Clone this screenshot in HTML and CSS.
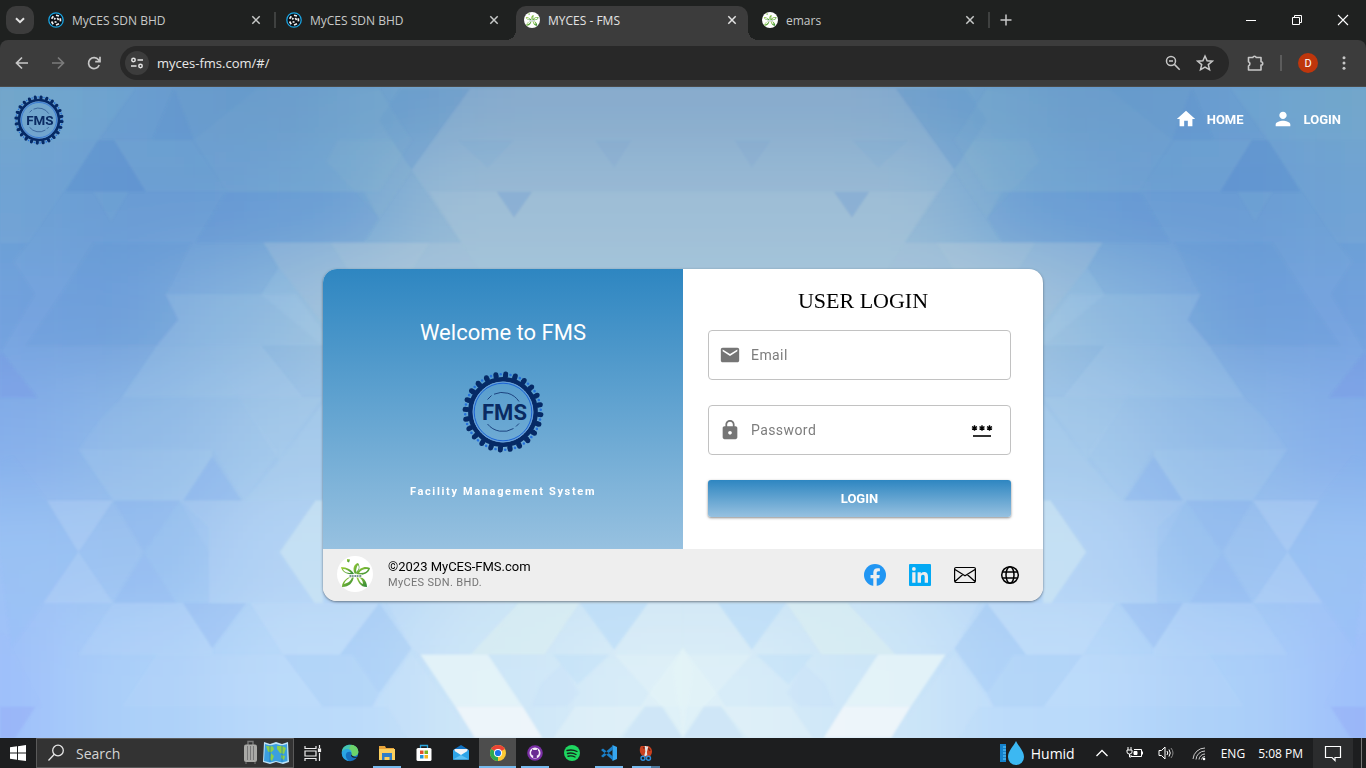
FILE: index.html
```
<!DOCTYPE html>
<html lang="en">
<head>
<meta charset="utf-8">
<title>MYCES - FMS</title>
<link rel="stylesheet" href="styles.css">
</head>
<body>
<svg class="defs" aria-hidden="true">
  <defs>
    <symbol id="close" viewBox="0 0 16 16"><path d="M4.3 4.3l7.4 7.4M11.7 4.3l-7.4 7.4" stroke="currentColor" stroke-width="1.5" fill="none"/></symbol>
    <symbol id="orbit" viewBox="0 0 16 16">
      <circle cx="8" cy="8" r="7.2" fill="#0c0f14" stroke="#1aa3e0" stroke-width="1.3"/>
      <path d="M8 3.200l3 .8M12.300 6.200l.2 3.200M11 11.800l-3 1.200M5.200 12.200L3.600 9.500M3.600 6.800L5.300 4.200M9.300 6l1.300 2M8.500 10.300L6.600 9.800M6.300 7.500l1-1.400" stroke="#f2f2f2" stroke-width="1.700" fill="none"/>
    </symbol>
    <linearGradient id="leaf" x1="0" y1="0" x2="1" y2="1"><stop offset="0" stop-color="#a4d436"/><stop offset="1" stop-color="#2a8437"/></linearGradient>
    <symbol id="flower" viewBox="0 0 36 36">
      <circle cx="18" cy="18" r="18" fill="#fff"/>
      <g fill="url(#leaf)">
        <path fill-rule="evenodd" d="M18 18C15 13 17 8 21 7c3 4 1 9-3 11zm1-2c3-2 3.500-5 2-7-1 1-2 4-2 7z"/>
        <path fill-rule="evenodd" d="M19 18c4-7 9-8 14-6-1 6-8 8-14 6zm3-1c5 .5 8-1 9-4-4-.5-7 1-9 4z"/>
        <path fill-rule="evenodd" d="M17 18C12 19 5 17 4 11c6 0 11 3 13 7zm-3-1c-2-2-5-4-8-4 1 3 4 4 8 4z"/>
        <path fill-rule="evenodd" d="M19 20c7 0 11 5 11 11-7 0-9-5-11-11zm2 1c3 1 5 4 5 7-3-1-4-4-5-7z"/>
        <path fill-rule="evenodd" d="M17 20c-1 7-5 11-12 11 0-6 5-10 12-11zm-2 1c-4 1-7 4-8 7 4-1 7-3 8-7z"/>
        <path d="M10 3l3 .5-1 3-2-1z"/>
      </g>
      <path d="M12 20h13" stroke="#fff" stroke-width="3"/>
      <path d="M12.500 20h12" stroke="#4a6b70" stroke-width="1.400" stroke-dasharray="2 .6 1.500 .8"/>
    </symbol>
    <symbol id="gear" viewBox="0 0 82 82">
      <g transform="rotate(4 41 41)" fill="none">
        <circle cx="41" cy="41" r="38" stroke="#062a66" stroke-width="5" stroke-linecap="round" pathLength="240" stroke-dasharray="0 10"/>
        <circle cx="41" cy="41" r="36" stroke="#062a66" stroke-width="5.200" stroke-linecap="round" pathLength="240" stroke-dasharray="0 10"/>
        <circle cx="41" cy="41" r="32.600" stroke="#062a66" stroke-width="4.800"/>
        <circle cx="41" cy="41" r="37.800" stroke="#2470dc" stroke-width="2.600" stroke-linecap="round" pathLength="240" stroke-dasharray="0 10" stroke-dashoffset="5"/>
      </g>
      <circle cx="41" cy="41" r="30" fill="none" stroke="#6aa0dc" stroke-width="1"/>
      <circle cx="41" cy="41" r="28.800" fill="none" stroke="#1b62d4" stroke-width="1"/>
      <path d="M25.500 28.500l4-4M32 23.200a20 20 0 0 1 25 7.300M25.500 53a20 20 0 0 0 26 4.500M54 55.500l3-3" fill="none" stroke="#1d4480" stroke-width="1"/>
      <text x="42.500" y="49" text-anchor="middle" font-family="Roboto, sans-serif" font-size="22" font-weight="700" fill="#0a2b63">FMS</text>
    </symbol>
  </defs>
</svg>

<header class="tabstrip">
  <button class="tab-search" aria-label="Search tabs"><svg width="16" height="16" viewBox="0 0 16 16"><path d="M4 6.200l4 4 4-4" fill="none" stroke="#e3e3e3" stroke-width="2"/></svg></button>
  <nav class="tabs" aria-label="Tabs">
    <div class="tab"><svg class="fav"><use href="#orbit"/></svg><span class="tab-title">MyCES SDN BHD</span><button class="tab-close" aria-label="Close"><svg width="16" height="16"><use href="#close"/></svg></button></div>
    <div class="tab no-sep"><svg class="fav"><use href="#orbit"/></svg><span class="tab-title">MyCES SDN BHD</span><button class="tab-close" aria-label="Close"><svg width="16" height="16"><use href="#close"/></svg></button></div>
    <div class="tab active no-sep"><svg class="fav"><use href="#flower"/></svg><span class="tab-title">MYCES - FMS</span><button class="tab-close" aria-label="Close"><svg width="16" height="16"><use href="#close"/></svg></button></div>
    <div class="tab"><svg class="fav"><use href="#flower"/></svg><span class="tab-title">emars</span><button class="tab-close" aria-label="Close"><svg width="16" height="16"><use href="#close"/></svg></button></div>
  </nav>
  <button class="new-tab" aria-label="New tab"><svg width="16" height="16" viewBox="0 0 16 16"><path d="M8 2.500v11M2.500 8h11" stroke="#c7c7c7" stroke-width="1.500"/></svg></button>
  <div class="win-buttons">
    <button aria-label="Minimize"><svg width="12" height="12" viewBox="0 0 12 12"><path d="M1 6.500h10" stroke="#fff"/></svg></button>
    <button aria-label="Restore"><svg width="12" height="12" viewBox="0 0 12 12"><path d="M1.500 3.500h7v7h-7zM3.500 3.500v-2h7v7h-2" fill="none" stroke="#fff"/></svg></button>
    <button aria-label="Close window"><svg width="12" height="12" viewBox="0 0 12 12"><path d="M1 1l10 10M11 1L1 11" stroke="#fff" stroke-width="1.100"/></svg></button>
  </div>
</header>

<div class="toolbar-wrap">
<div class="toolbar">
  <button class="tool" aria-label="Back"><svg width="16" height="16" viewBox="0 0 16 16"><path d="M14 8H3M8 2.500L2.500 8 8 13.500" fill="none" stroke="#c7c7c7" stroke-width="1.700"/></svg></button>
  <button class="tool" aria-label="Forward"><svg width="16" height="16" viewBox="0 0 16 16"><path d="M2 8h11M8 2.500L13.500 8 8 13.500" fill="none" stroke="#7b7b7b" stroke-width="1.700"/></svg></button>
  <button class="tool" aria-label="Reload"><svg width="16" height="16" viewBox="0 0 16 16"><path d="M13.200 10A5.500 5.500 0 1 1 12.500 4.800L14 6.500M14 1.800v4.900H9.200" fill="none" stroke="#c7c7c7" stroke-width="1.700"/></svg></button>
  <div class="omnibox">
    <button class="site-info" aria-label="View site information"><svg width="14" height="14" viewBox="0 0 14 14" fill="none" stroke="#e3e3e3" stroke-width="1.500"><circle cx="3.500" cy="4" r="1.700"/><path d="M7.500 4H13M1 10h5.500"/><circle cx="10.500" cy="10" r="1.700"/></svg></button>
    <input class="url" aria-label="Address" value="myces-fms.com/#/">
    <button class="tool" aria-label="Zoom"><svg width="16" height="16" viewBox="0 0 16 16" fill="none" stroke="#c7c7c7" stroke-width="1.500"><circle cx="6" cy="6" r="4.500"/><path d="M9.400 9.400L14.700 14.700M4 6h4"/></svg></button>
    <button class="tool" aria-label="Bookmark"><svg width="18" height="18" viewBox="0 0 18 18"><path d="M9 2l2.100 4.700 5.100.5-3.900 3.400 1.200 5.100L9 13l-4.500 2.700 1.200-5.100L1.800 7.200l5.100-.5z" fill="none" stroke="#c7c7c7" stroke-width="1.500"/></svg></button>
  </div>
  <button class="tool ext" aria-label="Extensions"><svg width="18" height="18" viewBox="0 0 18 18"><path d="M2.500 3.500h4.300a1.800 1.800 0 0 1 3.400 0H15v4.200a1.700 1.700 0 0 1 0 3.400v4.900H2.500v-4.100a2.200 2.200 0 0 0 0-4.100z" fill="none" stroke="#c7c7c7" stroke-width="1.600" stroke-linejoin="round"/></svg></button>
  <span class="divider"></span>
  <button class="profile" aria-label="Profile">D</button>
  <button class="tool" aria-label="Menu"><svg width="16" height="16" viewBox="0 0 16 16" fill="#c7c7c7"><circle cx="8" cy="2.700" r="1.500"/><circle cx="8" cy="8" r="1.500"/><circle cx="8" cy="13.300" r="1.500"/></svg></button>
</div>
</div>

<div class="page">
  <svg class="backdrop" viewBox="0 0 3136 1568" preserveAspectRatio="none" aria-hidden="true">
    <defs>
      <filter id="soft" x="-5%" y="-10%" width="110%" height="120%"><feGaussianBlur stdDeviation="100 85"/></filter>
      <filter id="edge" x="0" y="0" width="100%" height="100%"><feGaussianBlur stdDeviation="2.500"/></filter>
      <g id="tones">
        <path fill="#6fa4ca" d="M-400-300H150V150H-400z"/><path fill="#6a9ed0" d="M150-300H430V150H150z"/><path fill="#6699cc" d="M430-300H750V150H430z"/><path fill="#6ea2ce" d="M750-300H1050V150H750z"/><path fill="#7fa6cb" d="M1050-300H1570V150H1050z"/>
        <path fill="#6ea3d4" d="M-400 150H150V420H-400z"/><path fill="#6a9cd4" d="M150 150H600V420H150z"/><path fill="#6fa4d4" d="M600 150H900V420H600z"/><path fill="#93b7d4" d="M900 150H1570V420H900z"/>
        <path fill="#77a4e0" d="M-400 420H150V700H-400z"/><path fill="#73a2dc" d="M150 420H400V700H150z"/><path fill="#86b3de" d="M400 420H700V700H400z"/><path fill="#9fc2dc" d="M700 420H1570V700H700z"/>
        <path fill="#85aeea" d="M-400 700H180V980H-400z"/><path fill="#8fb9e7" d="M180 700H500V980H180z"/><path fill="#a0c6ea" d="M500 700H1570V980H500z"/>
        <path fill="#9dc3f4" d="M-400 980H180V1260H-400z"/><path fill="#9cc2f0" d="M180 980H500V1260H180z"/><path fill="#b0d2f4" d="M500 980H1000V1260H500z"/><path fill="#c8e2f4" d="M1000 980H1570V1260H1000z"/>
        <path fill="#9fc0fa" d="M-400 1260H150V1900H-400z"/><path fill="#acd0f9" d="M150 1260H500V1900H150z"/><path fill="#badafa" d="M500 1260H950V1900H500z"/><path fill="#cde6f8" d="M950 1260H1300V1900H950z"/><path fill="#d8ecf8" d="M1300 1260H1570V1900H1300z"/>
      </g>
      <g id="facets">
        <g opacity=".6">
        <g fill="#8fc0cc">
          <path opacity=".18" d="M0 4H310L225 128H0z"/><path opacity=".12" d="M225 128L65 375H0V128z"/>
          <path opacity=".2" d="M445 128L400 4H870L945 128 870 252H520z"/><path opacity=".2" d="M775 128H900L945 200 870 315 750 180z"/>
          <path opacity=".15" d="M262 128H440L520 252H335z"/><path opacity=".15" d="M215 252H295L255 325z"/>
        </g>
        <g fill="#c9d6dc">
          <path opacity=".2" d="M1080 4H1568V440H1100L945 200z"/><path opacity=".2" d="M985 252H1568V440H1100z"/>
          <path opacity=".34" d="M605 375H1060L1100 440H1000L742 570 640 435z"/><path opacity=".2" d="M760 375H985L945 440H800z"/>
        </g>
        <g fill="#4f86cf">
          <path opacity=".45" d="M225 128H262L335 252H150z"/><path opacity=".24" d="M520 252H835L870 315 835 375H450z"/>
          <path opacity=".2" d="M1080 4L1020 90 945 200 870 80 920 4z"/><path opacity=".2" d="M400 4H590L445 128H350z"/>
          <path opacity=".36" d="M1140 252H1222L1180 315z"/><path opacity=".12" d="M1365 128H1450L1410 195z"/><path opacity=".1" d="M1050 128H1180L1120 195z"/>
          <path opacity=".14" d="M140 499L215 375H440L380 499 410 560 360 623H60z"/><path opacity=".2" d="M0 635L85 747H0z" fill="#6a70e8"/>
          <path opacity=".14" d="M0 375H65L30 420 80 499 0 640z"/>
        </g>
        <g fill="#c4e0f0">
          <path opacity=".22" d="M380 499H680L742 590V623H360L410 560z"/><path opacity=".2" d="M640 435L742 570V623L600 499z"/>
          <path opacity=".24" d="M360 623H470L548 747H280z"/><path opacity=".26" d="M470 623H600L695 747H548z"/><path opacity=".12" d="M280 747H548L640 880 560 996 487 872H180L230 800z"/>
          <path opacity=".18" d="M548 747H742L640 900z"/><path opacity=".24" d="M180 872H487V890L420 996H260z"/><path opacity=".24" d="M640 900L742 760V996H560z"/>
        </g>
        <g fill="#d4e8fa">
          <path opacity=".34" d="M108 996H260L180 1120z"/><path opacity=".3" d="M180 1120L260 1243H100z"/><path opacity=".14" d="M412 996H724L642 1120 722 1243H480V1120z"/>
          <path opacity=".2" d="M260 1243H420L487 1352V1367H180z"/>
          <path opacity=".35" d="M575 1243H870L780 1367H650z"/><path opacity=".3" d="M890 1243H1180L1120 1367H965L945 1352z"/><path opacity=".14" d="M280 1492L360 1367H650L740 1492z"/>
          <path opacity=".3" d="M855 1492L945 1367 1090 1568H935L890 1492z"/>
        </g>
        <g fill="#82aff0">
          <path opacity=".4" d="M260 996H412L330 1120z"/><path opacity=".36" d="M330 1120L405 1243H260z"/><path opacity=".5" d="M487 890L555 996H420z"/>
          <path opacity=".14" d="M330 1120L412 996 480 1060V1243H405z"/><path opacity=".42" d="M420 1243H565L487 1352z"/><path opacity=".14" d="M0 1120V900L30 890 108 996 180 1120 100 1243 25 1352z"/>
          <path opacity=".34" d="M870 1243L945 1352 870 1460 810 1367H780z"/><path opacity=".2" d="M650 1367H810L870 1460 855 1492H740z"/>
          <path opacity=".2" fill="#9dc0ff" d="M0 1310L25 1352 95 1492H0z"/><path opacity=".5" fill="#8f9ff8" d="M0 1492H82L35 1568H0z"/>
        </g>
        </g>
        <path opacity=".6" fill="#d2e9f4" d="M642 1120L724 996H742V1243H722z"/>
        <path opacity=".5" fill="#e0f2f0" d="M1190 1243H1330L1250 1367H1080z"/>
        <path opacity=".6" fill="#b8daf8" d="M1332 1243H1488L1410 1355z"/>
        <path opacity=".35" fill="#dceef6" d="M1488 1243H1568V1367H1405z"/>
        <path opacity=".35" fill="#b8dcfa" d="M1270 1367H1400L1325 1440z"/>
        <path opacity=".3" fill="#c4def8" d="M1240 1440L1290 1390 1330 1460 1300 1492H1220z"/>
        <path opacity=".4" fill="#e6f4f8" d="M1410 1367H1568V1492H1470L1490 1460z"/>
        <path opacity=".5" fill="#e6f6f8" d="M1568 1350L1590 1400 1568 1568 1520 1492 1490 1460z"/>
        <path opacity=".4" fill="#e8f6f8" d="M1320 1492H1480L1420 1568H1270z"/>
        <path opacity=".4" fill="#c4def6" d="M1480 1492H1520L1568 1568H1430z"/>
        <path opacity=".85" fill="#e6f4f8" d="M965 1367H1120L1200 1492H1045z"/>
        <path opacity=".9" fill="#f1f6fa" d="M1045 1492H1200L1245 1568H1090z"/>
      </g>
    </defs>
    <rect width="3136" height="1568" fill="#8fb9e7"/>
    <g filter="url(#soft)"><use href="#tones"/><use href="#tones" transform="translate(3136 0) scale(-1 1)"/></g>
    <g filter="url(#edge)"><use href="#facets"/><use href="#facets" transform="translate(3136 0) scale(-1 1)"/></g>
  </svg>

  <header class="site-header">
    <a href="#/" class="brand" aria-label="FMS"><svg width="50" height="50"><use href="#gear"/></svg></a>
    <nav class="site-nav">
      <a href="#/"><svg width="22" height="22" viewBox="0 0 24 24" fill="#fff"><path d="M10 20v-6h4v6h5v-8h3L12 3 2 12h3v8z"/></svg>HOME</a>
      <a href="#/login"><svg width="22" height="22" viewBox="0 0 24 24" fill="#fff"><path d="M12 12c2.210 0 4-1.790 4-4s-1.790-4-4-4-4 1.790-4 4 1.790 4 4 4zm0 2c-2.670 0-8 1.340-8 4v2h16v-2c0-2.660-5.330-4-8-4z"/></svg>LOGIN</a>
    </nav>
  </header>

  <main class="stage">
    <section class="card">
      <div class="card-body">
        <div class="welcome">
          <h1>Welcome to FMS</h1>
          <svg class="welcome-logo"><use href="#gear"/></svg>
          <p>Facility Management System</p>
        </div>
        <form class="login">
          <h2>USER LOGIN</h2>
          <label class="field">
            <svg width="22" height="22" viewBox="0 0 24 24" fill="#757575"><path d="M20 4H4c-1.100 0-2 .9-2 2v12c0 1.100.9 2 2 2h16c1.100 0 2-.9 2-2V6c0-1.100-.9-2-2-2zm0 4l-8 5-8-5V6l8 5 8-5z"/></svg>
            <input type="email" placeholder="Email" aria-label="Email">
          </label>
          <label class="field">
            <svg width="22" height="22" viewBox="0 0 24 24" fill="#757575"><path d="M18 8h-1V6c0-2.760-2.240-5-5-5S7 3.240 7 6v2H6c-1.100 0-2 .9-2 2v10c0 1.100.9 2 2 2h12c1.100 0 2-.9 2-2V10c0-1.100-.9-2-2-2zm-6 9c-1.100 0-2-.9-2-2s.9-2 2-2 2 .9 2 2-.9 2-2 2zm3.100-9H8.900V6c0-1.710 1.390-3.100 3.100-3.100s3.100 1.390 3.100 3.100z"/></svg>
            <input type="password" placeholder="Password" aria-label="Password">
            <button type="button" class="reveal" aria-label="Show password"><svg width="22" height="22" viewBox="0 0 22 22"><path d="M2 17h18" stroke="#000" stroke-width="1.600"/><path d="M3.500 6.200v5.600M1 7.600l5 2.800M6 7.600l-5 2.800M11 6.200v5.600M8.500 7.600l5 2.800M13.500 7.600l-5 2.800M18.500 6.200v5.600M16 7.600l5 2.800M21 7.600l-5 2.800" stroke="#000" stroke-width="1.400"/></svg></button>
          </label>
          <button type="button" class="submit">LOGIN</button>
        </form>
      </div>
      <footer class="card-footer">
        <svg class="avatar"><use href="#flower"/></svg>
        <div class="owner"><span>©2023 MyCES-FMS.com</span><small>MyCES SDN. BHD.</small></div>
        <nav class="social">
          <a href="#facebook" aria-label="Facebook"><svg width="22" height="22" viewBox="0 0 22 22"><circle cx="11" cy="11" r="11" fill="#2196f3"/><path d="M9.300 22v-7.800H6.500V11h2.800V8.600c0-2.800 1.700-4.300 4.200-4.300 1.200 0 2.400.2 2.400.2v2.700h-1.400c-1.400 0-1.800.8-1.800 1.700V11h3.100l-.5 3.200h-2.600V22z" fill="#eee"/></svg></a>
          <a href="#linkedin" aria-label="LinkedIn"><svg width="22" height="22" viewBox="0 0 22 22"><rect width="22" height="22" rx="1" fill="#03a9f4"/><path d="M3.200 8.200h3.300v10.600H3.200zM4.900 3a1.900 1.900 0 1 1 0 3.800 1.900 1.900 0 0 1 0-3.800zM8.600 8.200h3.200v1.500c.5-.9 1.600-1.800 3.200-1.800 3.400 0 4 2.200 4 5.100v5.800h-3.300v-5.200c0-1.200 0-2.800-1.700-2.800s-2 1.300-2 2.700v5.300H8.600z" fill="#eee"/></svg></a>
          <a href="#mail" aria-label="Mail"><svg width="22" height="22" viewBox="0 0 22 22"><path d="M2 3.500h18a1.400 1.400 0 0 1 1.400 1.400v12.200a1.400 1.400 0 0 1-1.400 1.400H2A1.400 1.400 0 0 1 .6 17.100V4.900A1.400 1.400 0 0 1 2 3.500zM1 5.500l10 6.300 10-6.300M1 17.500l7.800-7M21 17.500l-7.800-7" fill="none" stroke="#000" stroke-width="1.200"/></svg></a>
          <a href="#web" aria-label="Website"><svg width="22" height="22" viewBox="0 0 22 22" fill="none" stroke="#000" stroke-width="1.500"><circle cx="11" cy="11" r="8.300"/><ellipse cx="11" cy="11" rx="4" ry="8.300"/><path d="M3.500 8h15M3.500 14h15"/></svg></a>
        </nav>
      </footer>
    </section>
  </main>
</div>

<footer class="taskbar">
  <button class="start" aria-label="Start"><svg width="16" height="16" viewBox="0 0 16 16" fill="#fff"><path d="M0 2.300L7 1.300V7.600H0zM8 1.200L16 0V7.600H8zM0 8.500H7V14.800L0 13.800zM8 8.500H16V16L8 14.900z"/></svg></button>
  <label class="search">
    <svg width="20" height="20" viewBox="0 0 20 20" fill="none" stroke="#e6e6e6" stroke-width="1.300"><circle cx="12" cy="7.500" r="5.300"/><path d="M8.300 11.300L2.500 17.500"/></svg>
    <input type="text" placeholder="Search" aria-label="Search">
    <svg width="46" height="26" viewBox="0 0 46 26"><path d="M5 5V1.500h5V5" fill="none" stroke="#777" stroke-width="1.400"/><rect x="1" y="4.500" width="13" height="17.500" rx="2" fill="#a9a9a6"/><path d="M4.500 6v14M7.500 6v14M10.500 6v14" stroke="#777"/><path d="M3 22v2M12 22v2" stroke="#555" stroke-width="2"/>
      <path d="M21 2l6 2 6-2 6 2 6-2 1 20-6 2-7-2-6 2-7-2z" fill="#bfe3f7"/><path d="M22 4l5 1.500 6-1.500 6 1.500 5-1.500 .5 17-5.500 1.500-6-1.500-6 1.500-6-1.500z" fill="#3b9fe0"/><path d="M23 6l7 .5 1 3-3 3-3-1zM28 13l3 3-2 5-2-2zM34 6l5 0 4 2-2 6-4-1-3-4zM38 15l4 1-1 4-3-2z" fill="#8bcf4a"/><path d="M27 5v17M39 5v17" stroke="#176fb5" stroke-width=".6"/></svg>
  </label>
  <div class="apps">
    <button aria-label="Task view"><svg width="18" height="18" viewBox="0 0 18 18" fill="none" stroke="#eee" stroke-width="1.200"><path d="M1 2V4.500H12V2M1 17V14.500H12V17M1 7H12V12H1zM15.500 1v3M15.500 9v8"/><rect x="14.500" y="5" width="2" height="2.500" fill="#fff"/></svg></button>
    <button aria-label="Edge"><svg width="18" height="18" viewBox="0 0 18 18"><circle cx="9" cy="9" r="8.300" fill="#1670c0"/><path d="M.8 8C1 3 5 .7 9 .7c5 0 8.300 3.300 8.300 7 0 3-2.300 4.300-4.500 4.300-1.800 0-2.500-.8-2-1.700C11 6.500 5 4.500.8 8z" fill="#45c6b0"/><path d="M10 .8c4.500.3 7.300 3.500 7.300 6.900 0 3-2.300 4.300-4.500 4.300-1.800 0-2.500-.8-2-1.700C11 7 10 5.500 8 5z" fill="#6cd36a"/><path d="M.8 8C3 4 9 4 10.500 8 7 7 4.500 8.500 4.800 12c.2 2 1.500 4 3.200 5C3.500 16.500.5 13 .8 8z" fill="#2aa5e4"/><path d="M10.300 10.500c-1 2 1.500 3.500 4 3.200 1.200-.1 2-.6 2.300-.8-2 .4-4.800 0-6.300-2.400z" fill="#1d1e1f"/></svg></button>
    <button class="open" aria-label="File Explorer"><svg width="18" height="18" viewBox="0 0 18 18"><path d="M1 2h6l1 2h8v3H1z" fill="#e8a33a"/><path d="M1 5h16v11H1z" fill="#fbd05f"/><path d="M4 9h10v7h-2.500v-3h-5v3H4z" fill="#2f7ec8"/></svg></button>
    <button aria-label="Store"><svg width="18" height="18" viewBox="0 0 18 18"><path d="M5.500 5V1.500h7V5" fill="none" stroke="#2ba6dd" stroke-width="1.300"/><rect x="1.500" y="4" width="15" height="13" rx="1.500" fill="#fff"/><path d="M5 6.500h3.500V10H5z" fill="#e2502b"/><path d="M9.500 6.500H13V10H9.500z" fill="#7ab41e"/><path d="M5 11h3.500v3.500H5z" fill="#2295d8"/><path d="M9.500 11H13v3.500H9.500z" fill="#f7b51c"/></svg></button>
    <button aria-label="Mail"><svg width="18" height="18" viewBox="0 0 18 18"><path d="M1 6l8-5 8 5v9.500H1z" fill="#1171c1"/><path d="M2.500 5h13v5l-6 3-7-3z" fill="#f1f3f5"/><path d="M1 6l8 5 8-5v9.500H1z" fill="#2da4e8"/><path d="M1 15.500l8-4.500 8 4.500z" fill="#5cc2f5"/></svg></button>
    <button class="open current" aria-label="Chrome"><svg width="18" height="18" viewBox="0 0 18 18"><circle cx="9" cy="9" r="8" fill="#fcc934"/><path d="M9 9L2.100 5A8 8 0 0 1 15.900 5z" fill="#ea4335"/><path d="M2.100 5L9 9v8A8 8 0 0 1 2.100 5z" fill="#2da94f"/><path d="M9 9l3.500 2L9 17z" fill="#fcc934"/><circle cx="9" cy="9" r="4" fill="#fff"/><circle cx="9" cy="9" r="3.100" fill="#1a73e8"/></svg></button>
    <button class="open" aria-label="GitHub Desktop"><svg width="18" height="18" viewBox="0 0 18 18"><circle cx="9" cy="9" r="7.800" fill="#7a2fa5"/><circle cx="9" cy="9" r="5.500" fill="#f4ecf8"/><path d="M7.200 14v-2.500C4.500 11 4.800 7 6 6.700V5l1.700.9h2.600L12 5v1.700c1.200.3 1.500 4.300-1.200 4.800V14z" fill="#6a2a92"/></svg></button>
    <button aria-label="Spotify"><svg width="18" height="18" viewBox="0 0 18 18"><circle cx="9" cy="9" r="8" fill="#1ed760"/><path d="M4 6.500c3.500-1 7-.6 10 1M4.500 9.500c3-.8 6-.4 8.500 1M5 12.200c2.500-.6 5-.3 7 .8" fill="none" stroke="#15251b" stroke-width="1.400" stroke-linecap="round"/></svg></button>
    <button class="open" aria-label="Visual Studio Code"><svg width="18" height="18" viewBox="0 0 18 18"><path d="M12.500 1L17 3v12l-4.500 2z" fill="#36a6ee"/><path d="M13 1.500v4L3 13.500 1 12zM13 16.500v-4L3 4.500 1 6z" fill="#1b80c9"/></svg></button>
    <button class="open multi" aria-label="Snip"><svg width="18" height="18" viewBox="0 0 18 18"><path d="M4 2h7c4 1 5 6 3 9-1 2-3 2-4 2-4 0-6-2-7-5-.5-3 0-5 1-6z" fill="#c8401f"/><path d="M6 4c3-1 6 0 7 3" fill="none" stroke="#7d2210" stroke-width="1.500"/><path d="M8.500 2l1 9.500M10.500 2.500L8 12" stroke="#e5e5e5" stroke-width="1.600"/><circle cx="6" cy="14.300" r="2" fill="none" stroke="#2f8fdc" stroke-width="1.400"/><circle cx="11.500" cy="14.300" r="2" fill="none" stroke="#2f8fdc" stroke-width="1.400"/></svg></button>
  </div>
  <div class="tray">
    <button class="weather"><svg width="26" height="26" viewBox="0 0 26 26"><path d="M1 4h6v18H1z" fill="#1582cc"/><path d="M4 7h3M4 10h3M4 13h3M4 16h3M4 19h3" stroke="#6bd0ff"/><path d="M17 1c3 6 8 10 8 16a8 8 0 0 1-16 0c0-6 5-10 8-16z" fill="#3cb8f2"/></svg>Humid</button>
    <button class="t-chevron" aria-label="Hidden icons"><svg width="14" height="14" viewBox="0 0 14 14"><path d="M1.500 10L7 4.500l5.500 5.500" fill="none" stroke="#fff" stroke-width="1.300"/></svg></button>
    <button class="t-icon" aria-label="Battery"><svg width="18" height="14" viewBox="0 0 18 14" fill="none" stroke="#fff"><path d="M8 3.500h7.500v7H5V9M16.500 5.500v3M2 1v3M5 1v3M1 4h5v2q0 2-2.500 2T1 6zM3.500 8v3H5"/><path d="M8 5.500h3v3H8z" fill="#fff"/></svg></button>
    <button class="t-icon" aria-label="Volume"><svg width="18" height="16" viewBox="0 0 18 16" fill="none" stroke="#fff"><path d="M1 5.500h2.500L7 2v12l-3.500-3.500H1z"/><path d="M9 6q1.500 2 0 4M11 4.500q2.500 3.500 0 7"/><path d="M13 3q4 5 0 10" stroke="#888"/></svg></button>
    <button class="t-icon" aria-label="Network"><svg width="16" height="16" viewBox="0 0 16 16" fill="none" stroke="#ccc"><path d="M2 14A12 12 0 0 1 14 3M5 14.500a9 9 0 0 1 9-8.500M8 14.500A6 6 0 0 1 14 9M10.500 14.500A3.500 3.500 0 0 1 14 11.500"/><circle cx="13" cy="14" r="1.300" fill="#fff" stroke="none"/></svg></button>
    <button class="t-lang">ENG</button>
    <button class="t-clock">5:08 PM</button>
    <button class="t-notes" aria-label="Notifications"><svg width="18" height="18" viewBox="0 0 18 18"><path d="M1.500 2.500h15v11H11l0 3-3-3H1.500z" fill="none" stroke="#fff" stroke-width="1.200"/></svg></button>
    <span class="show-desktop"></span>
  </div>
</footer>
</body>
</html>
```
FILE: styles.css
```
* { box-sizing: border-box; }
html, body { height: 100%; }
body {
  margin: 0;
  display: flex;
  flex-direction: column;
  overflow: hidden;
  font-family: Roboto, "Liberation Sans", sans-serif;
  background: #1f2120;
}
button, input { font: inherit; color: inherit; border: 0; padding: 0; margin: 0; background: none; }
button { display: flex; align-items: center; justify-content: center; }
input { width: 0; min-width: 0; outline: 0; }
a { color: inherit; text-decoration: none; }
svg { display: block; flex: none; }
.defs { position: absolute; width: 0; height: 0; }

/* Browser tab strip */
.tabstrip, .toolbar, .taskbar { font-family: "Open Sans", "Noto Sans", sans-serif; }
.tabstrip { display: flex; height: 40px; flex: none; padding-left: 6px; background: #1f2120; color: #c7c9c8; }
.tab-search { width: 28px; height: 28px; margin: 6px 6px 0 0; border-radius: 10px; background: #3c3c3c; }
.tabs { display: flex; flex: 0 1 952px; min-width: 0; }
.tab {
  position: relative;
  display: flex;
  flex: 1 1 0;
  min-width: 0;
  align-items: center;
  height: 34px;
  margin: 6px 6px 0 0;
  padding: 0 8px 6px;
  gap: 8px;
  border-radius: 10px 10px 0 0;
  font-size: 12px;
}
.tab::after { content: ""; position: absolute; right: -4px; top: 6px; width: 2px; height: 16px; background: #3f4140; }
.tab.no-sep::after { display: none; }
.tab.active { background: #3c3c3c; color: #e3e3e3; }
.tab.active::before {
  content: "";
  position: absolute;
  left: -10px;
  right: -10px;
  bottom: 0;
  height: 10px;
  background:
    radial-gradient(circle at 0 0, transparent 10px, #3c3c3c 10px) left / 10px 10px no-repeat,
    radial-gradient(circle at 100% 0, transparent 10px, #3c3c3c 10px) right / 10px 10px no-repeat;
}
.fav { width: 16px; height: 16px; }
.tab-title { flex: 1; white-space: nowrap; overflow: hidden; }
.new-tab { width: 28px; height: 40px; }
.win-buttons { display: flex; margin-left: auto; }
.win-buttons button { width: 46px; height: 40px; }

/* Browser toolbar */
.toolbar-wrap { flex: none; background: #1f2120; }
.toolbar {
  display: flex;
  align-items: center;
  height: 47px;
  padding: 0 4px;
  border-radius: 8px 8px 0 0;
  border-bottom: 1px solid #4a4a4a;
  background: #3c3c3c;
}
.tool { width: 36px; height: 36px; flex: none; }
.omnibox { display: flex; flex: 1; align-items: center; height: 34px; margin: 0 8px; padding: 0 8px 0 5px; border-radius: 17px; background: #282828; }
.omnibox .tool { width: 32px; }
.site-info { width: 24px; height: 24px; flex: none; border-radius: 12px; background: #3c3c3c; }
.url { flex: 1; margin-left: 8px; font-size: 13px; color: #e8e8e8; }
.divider { width: 2px; height: 16px; margin: 0 16px 0 7px; background: #5c5c5c; }
.profile { width: 20px; height: 20px; margin-right: 8px; border-radius: 50%; background: #bf360c; color: #fff; font-family: Roboto, sans-serif; font-size: 11px; }

/* Web page */
.page { position: relative; flex: 1; min-height: 0; overflow: hidden; display: flex; flex-direction: column; background: #8fb9e7; }
.backdrop { position: absolute; inset: 0; width: 100%; height: 100%; }
.site-header { position: relative; display: flex; align-items: center; justify-content: space-between; height: 66px; padding: 0 25px 0 14px; flex: none; }
.site-nav { display: flex; gap: 28px; padding-bottom: 2px; color: #fff; font-size: 13px; font-weight: 700; }
.site-nav a { display: flex; align-items: center; gap: 10px; }
.stage { position: relative; display: flex; justify-content: center; padding: 116px 24px 24px; }
.card { width: 100%; max-width: 720px; border-radius: 14px; overflow: hidden; background: #fff; box-shadow: 0 1px 3px rgba(0, 0, 0, .35), 0 1px 2px rgba(0, 0, 0, .15); }
.card-body { display: grid; grid-template-columns: 1fr 1fr; min-height: 280px; }
.welcome { display: flex; flex-direction: column; align-items: center; padding-top: 48px; color: #fff; background: linear-gradient(#2e86c1, #97c1e0); }
.welcome h1 { margin: 0; font-size: 22px; line-height: 32px; font-weight: 400; }
.welcome-logo { width: 82px; height: 82px; margin: 22px 0 31px; }
.welcome p { margin: 0; font-size: 11px; line-height: 16px; font-weight: 700; letter-spacing: .15em; }
.login { display: flex; flex-direction: column; gap: 25px; padding: 16px 32px 31px 25px; }
.login h2 { margin: 0 -7px -12px 0; font-family: "Liberation Serif", serif; font-size: 22px; line-height: 32px; font-weight: 400; text-align: center; color: #000; }
.field { display: flex; align-items: center; height: 50px; padding: 0 17px 0 10px; border: 1px solid #c2c2c2; border-radius: 4px; }
.field input { flex: 1; margin-left: 10px; font-size: 14px; letter-spacing: .03em; color: #333; }
.field input::placeholder { color: #7d7d7d; opacity: 1; }
.submit { height: 37px; border-radius: 3px; background: linear-gradient(#2e86c1, #97c1e0); box-shadow: 0 1px 3px rgba(0, 0, 0, .35), 0 1px 2px rgba(0, 0, 0, .15); color: #fff; font-size: 13px; font-weight: 700; }
.card-footer { display: flex; align-items: center; height: 52px; padding: 0 22px 2px 14px; background: #eee; color: #000; }
.avatar { width: 36px; height: 36px; }
.owner { display: flex; flex-direction: column; margin-left: 15px; font-size: 13px; line-height: 17px; }
.owner small { font-size: 11px; line-height: 16px; letter-spacing: .03em; color: #757575; }
.social { display: flex; gap: 23px; margin-left: auto; padding-top: 1px; }

/* Desktop taskbar */
.taskbar { display: flex; flex: none; height: 30px; background: #1d1e1f; color: #fff; font-size: 12px; }
.start { width: 36px; }
.search { display: flex; flex: 0 1 258px; align-items: center; padding: 0 4px 0 9px; border: 1px solid #5a5a5a; background: #333; }
.search input { flex: 1; margin-left: 10px; font-size: 14px; }
.search input::placeholder { color: #d5d5d5; opacity: 1; }
.apps { display: flex; }
.apps button { width: 37px; border: solid transparent; border-width: 2px 0; }
.apps .open { background: linear-gradient(#76b9ed, #76b9ed) center bottom / 28px 2px no-repeat border-box; }
.apps .current { background: linear-gradient(#76b9ed, #76b9ed) center bottom / 100% 2px no-repeat border-box, #4d4d4d border-box; }
.apps .multi { background: linear-gradient(90deg, #76b9ed 19px, #4b779a 19px) center bottom / 28px 2px no-repeat border-box; }
.tray { display: flex; margin-left: auto; align-items: stretch; }
.weather { gap: 6px; margin-right: 16px; font-size: 14px; }
.t-chevron { width: 22px; margin-right: 12px; }
.t-icon { width: 20px; margin-right: 12px; }
.t-lang { margin-right: 13px; }
.t-clock { margin-right: 10px; }
.t-notes { width: 40px; background: #2b2c2d; }
.show-desktop { width: 1px; margin: 0 4px 0 8px; background: #777; }
```
